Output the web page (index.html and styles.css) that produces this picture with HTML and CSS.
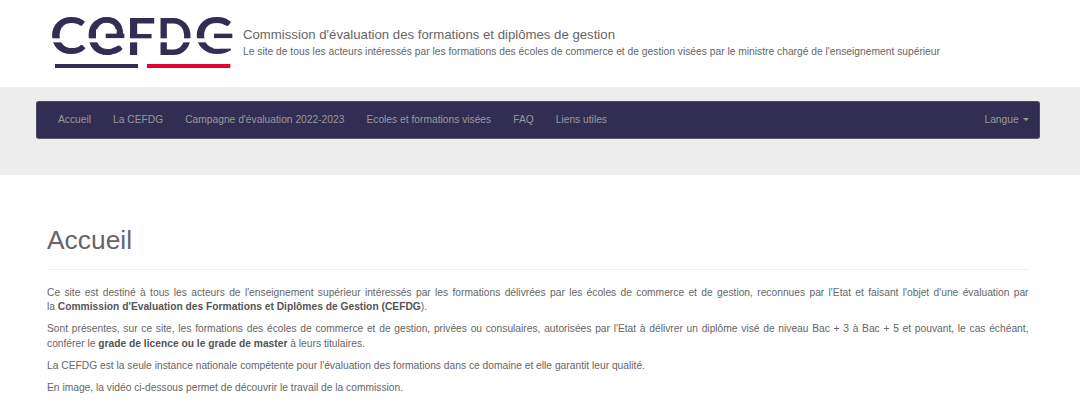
FILE: index.html
```html
<!DOCTYPE html>
<html lang="fr">

<head>
    <meta charset="UTF-8">
    <meta name="viewport" content="width=device-width, initial-scale=1.0">
    <title>Accueil | CEFDG</title>
    <link rel="stylesheet" href="styles.css">
</head>

<body>
    <header class="header">
        <svg class="logo" viewBox="36 48 546 162" role="img" aria-label="CEFDG">
            <g class="logo-letters">
                <text transform="translate(30 163) scale(1.05 1)">C</text>
                <text class="logo-e" transform="translate(138 163) scale(1.05 1)">e</text>
                <text transform="translate(257 165) scale(1.02 1)">F</text>
                <text transform="translate(350 165) scale(0.9 1)">D</text>
                <text transform="translate(464 163) scale(1.03 1)">G</text>
            </g>
            <!-- barres du e et du G -->
            <rect class="logo-cut" x="168" y="88" width="62" height="28" />
            <rect class="logo-blue" x="197" y="101" width="56" height="14" />
            <rect class="logo-cut" x="520" y="92" width="62" height="54" />
            <rect class="logo-blue" x="522" y="101" width="55" height="14" />
            <rect class="logo-cut" x="36" y="115" width="546" height="12" />
            <rect class="logo-blue" x="45" y="192" width="249" height="12" />
            <rect class="logo-red" x="321" y="192" width="250" height="12" />
        </svg>
        <div class="slogan">
            <div class="site-name">Commission d'évaluation des formations et diplômes de gestion</div>
            <div class="site-desc">Le site de tous les acteurs intéressés par les formations des écoles de commerce et de gestion visées par le ministre chargé de l'enseignement supérieur</div>
        </div>
    </header>

    <div class="nav-band">
        <nav class="navbar">
            <ul class="menu">
                <li><a href="#">Accueil</a></li>
                <li><a href="#">La CEFDG</a></li>
                <li><a href="#">Campagne d'évaluation 2022-2023</a></li>
                <li><a href="#">Ecoles et formations visées</a></li>
                <li><a href="#">FAQ</a></li>
                <li><a href="#">Liens utiles</a></li>
            </ul>
            <a class="langue" href="#">Langue <span class="caret"></span></a>
        </nav>
    </div>

    <main class="content">
        <h1>Accueil</h1>
        <p>Ce site est destiné à tous les acteurs de l'enseignement supérieur intéressés par les formations délivrées par les écoles de commerce et de gestion, reconnues par l'Etat et faisant l'objet d'une évaluation par la&nbsp;<strong>Commission d'Evaluation des Formations et Diplômes de Gestion (CEFDG</strong>).</p>
        <p>Sont présentes, sur ce site, les formations des écoles de commerce et de gestion, privées ou consulaires, autorisées par l'Etat à délivrer un diplôme visé de niveau Bac + 3 à Bac + 5 et pouvant, le cas échéant, conférer le <strong>grade de licence ou le grade de master</strong> à leurs titulaires.</p>
        <p>La CEFDG est la seule instance nationale compétente pour l'évaluation des formations dans ce domaine et elle garantit leur qualité.</p>
        <p>En image, la vidéo ci-dessous permet de découvrir le travail de la commission.</p>
    </main>
</body>

</html>
```

FILE: styles.css
```css
* {
    box-sizing: border-box;
}

body {
    margin: 0;
    font-family: "Liberation Sans", Arial, sans-serif;
    font-size: 10.267px;
    line-height: 14.67px;
    color: #666;
    background-color: #fff;
}

/* En-tête */
.header {
    display: flex;
    height: 86.5px;
    padding: 16px 0 0 52px;
}

.logo {
    width: 182px;
    height: 54px;
    margin-right: 9px;
    overflow: visible;
}

.logo-letters {
    font-family: Lato, sans-serif;
    font-size: 156px;
    font-weight: bold;
    fill: #322e53;
}

.logo-e {
    font-size: 213px;
    font-weight: normal;
    stroke: #322e53;
    stroke-width: 3px;
}

.logo-cut {
    fill: #fff;
}

.logo-blue {
    fill: #322e53;
}

.logo-red {
    fill: #e4032e;
}

.slogan {
    padding-top: 9px;
}

.site-name {
    font-size: 13.2px;
    line-height: 19px;
}

.site-desc {
    padding-top: 1px;
    font-size: 10.27px;
}

/* Menu */
.nav-band {
    height: 88px;
    padding: 14.5px 40px 0 36px;
    background-color: #ededed;
}

.navbar {
    display: flex;
    justify-content: space-between;
    align-items: center;
    height: 38px;
    padding: 0 10px 0 11px;
    border: 1px solid #4b4965;
    border-bottom-color: #5c5b63;
    border-radius: 3px;
    background-color: #322e53;
}

.menu {
    display: flex;
    margin: 0;
    padding: 0;
    list-style: none;
}

.navbar a {
    color: #999;
    text-decoration: none;
}

.menu a {
    padding: 0 11px;
}

.menu li:first-child a {
    padding-left: 10px;
}

.caret {
    display: inline-block;
    margin-left: 1.5px;
    vertical-align: middle;
    border-top: 3px solid #999;
    border-left: 3px solid transparent;
    border-right: 3px solid transparent;
}

/* Contenu */
.content {
    padding: 51px 51.5px 0 47px;
    text-align: justify;
}

h1 {
    margin: 0 0 16px;
    padding-bottom: 14px;
    border-bottom: 1px solid #eee;
    font-size: 26.4px;
    font-weight: normal;
    line-height: 29px;
}

p {
    margin: 0 0 7.33px;
}

strong {
    color: #555;
}
```
